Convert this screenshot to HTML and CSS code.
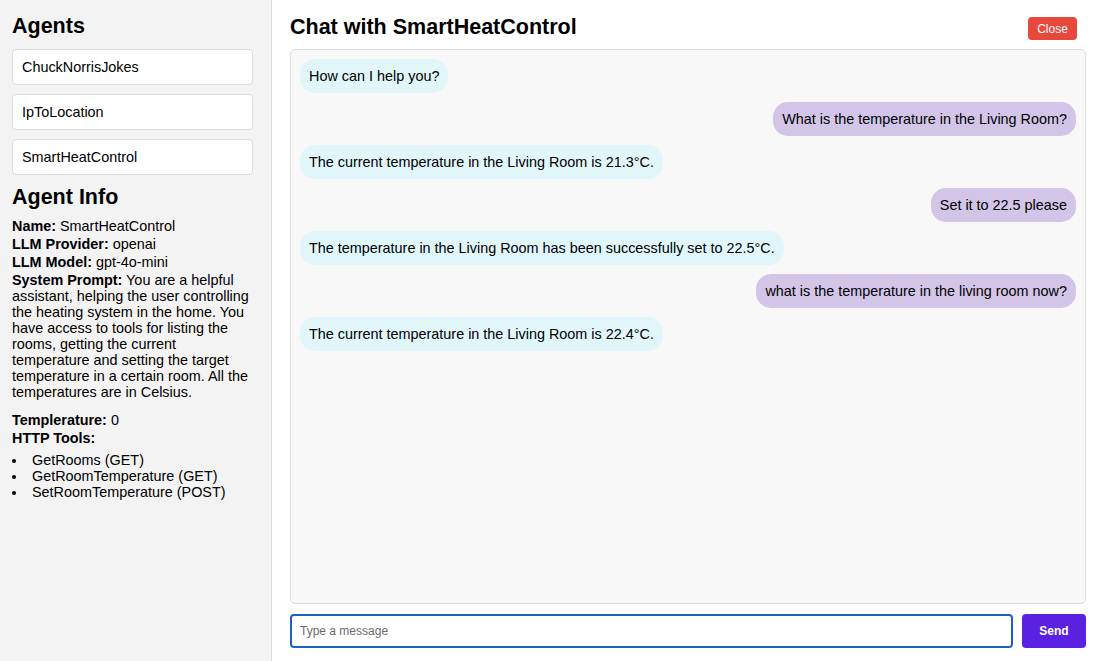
FILE: index.html
```html
<!DOCTYPE html>
<html>
<head>
<meta charset="utf-8">
<link rel="stylesheet" href="styles.css">
</head>
<body>
<div class="app">
  <aside class="sidebar">
    <h2 class="title">Agents</h2>
    <div class="agent-list">
      <div class="agent">ChuckNorrisJokes</div>
      <div class="agent">IpToLocation</div>
      <div class="agent">SmartHeatControl</div>
    </div>
    <h2 class="title info-title">Agent Info</h2>
    <p class="info"><b>Name:</b> SmartHeatControl</p>
    <p class="info"><b>LLM Provider:</b> openai</p>
    <p class="info"><b>LLM Model:</b> gpt-4o-mini</p>
    <p class="info prompt"><b>System Prompt:</b> You are a helpful assistant, helping the user controlling the heating system in the home. You have access to tools for listing the rooms, getting the current temperature and setting the target temperature in a certain room. All the temperatures are in Celsius.</p>
    <p class="info"><b>Templerature:</b> 0</p>
    <p class="info"><b>HTTP Tools:</b></p>
    <ul class="tools">
      <li>GetRooms (GET)</li>
      <li>GetRoomTemperature (GET)</li>
      <li>SetRoomTemperature (POST)</li>
    </ul>
  </aside>
  <main class="main">
    <div class="header">
      <h2 class="title">Chat with SmartHeatControl</h2>
      <button class="close">Close</button>
    </div>
    <div class="chat">
      <div class="msg bot">How can I help you?</div>
      <div class="msg user">What is the temperature in the Living Room?</div>
      <div class="msg bot">The current temperature in the Living Room is 21.3°C.</div>
      <div class="msg user">Set it to 22.5 please</div>
      <div class="msg bot">The temperature in the Living Room has been successfully set to 22.5°C.</div>
      <div class="msg user">what is the temperature in the living room now?</div>
      <div class="msg bot">The current temperature in the Living Room is 22.4°C.</div>
    </div>
    <div class="composer">
      <input class="input" type="text" placeholder="Type a message">
      <button class="send">Send</button>
    </div>
  </main>
</div>
</body>
</html>
```
FILE: styles.css
```css
* { box-sizing: border-box; }
html, body { margin: 0; padding: 0; }
body {
  font-family: "Liberation Sans", Arial, sans-serif;
  font-size: 14.4px;
  color: #000;
  background: #fff;
}
.app {
  display: flex;
  height: 661px;
}
.sidebar {
  width: 272px;
  flex: none;
  background: #f3f3f3;
  border-right: 1px solid #dcdcdc;
  padding: 14px 18px 0 12px;
}
.title {
  margin: 0;
  font-size: 21.5px;
  line-height: 25px;
  font-weight: bold;
}
.agent-list {
  display: flex;
  flex-direction: column;
  gap: 9px;
  margin-top: 10px;
  margin-bottom: 10px;
}
.agent {
  height: 36px;
  display: flex;
  align-items: center;
  padding-left: 9px;
  background: #fff;
  border: 1px solid #ddd;
  border-radius: 4px;
}
.info-title { margin-bottom: 7px; }
.info {
  margin: 0;
  line-height: 18px;
}
.prompt {
  line-height: 16px;
  margin: 1px 0 11px;
}
.tools {
  margin: 5px 0 0;
  padding-left: 15px;
  line-height: 16px;
}
.tools li { padding-left: 5px; }
.main {
  flex: 1;
  display: flex;
  flex-direction: column;
  padding: 14px 14px 13px 18px;
  min-width: 0;
}
.header {
  display: flex;
  justify-content: space-between;
  align-items: center;
  height: 26px;
  margin-bottom: 9px;
}
.close {
  background: #e8473b;
  color: #fff;
  border: none;
  border-radius: 4px;
  font-family: inherit;
  font-size: 12px;
  height: 23px;
  width: 49px;
  padding: 0;
  margin-right: 9px;
  margin-top: 3px;
}
.chat {
  flex: 1;
  background: #f8f8f8;
  border: 1px solid #ddd;
  border-radius: 5px;
  padding: 9px;
  display: flex;
  flex-direction: column;
  align-items: flex-start;
  gap: 9px;
}
.msg {
  padding: 9px 9px;
  line-height: 16px;
  border-radius: 15px;
}
.bot { background: #e0f6f9; }
.user { background: #d2c5e8; align-self: flex-end; }
.composer {
  display: flex;
  gap: 9px;
  margin-top: 10px;
  height: 34px;
}
.input {
  flex: 1;
  border: 2px solid #1a62c8;
  border-radius: 4px;
  padding: 0 8px;
  font-family: inherit;
  font-size: 12px;
  outline: none;
}
.input::placeholder { color: #6b6b6b; }
.send {
  width: 64px;
  background: #5b21e3;
  color: #fff;
  border: none;
  border-radius: 4px;
  font-family: inherit;
  font-size: 12px;
  font-weight: bold;
}
```
